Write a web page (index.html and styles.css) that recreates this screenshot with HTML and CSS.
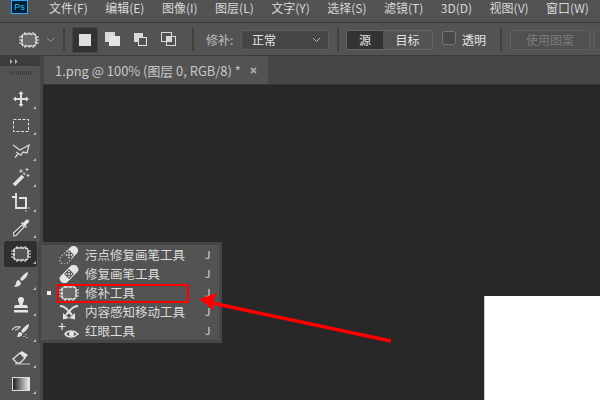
FILE: index.html
```html
<!DOCTYPE html>
<html lang="zh-CN">
<head>
<meta charset="UTF-8">
<title>Photoshop</title>
<link rel="stylesheet" href="styles.css">
</head>
<body>
<div class="app">
    <header class="menubar">
        <div class="logo">Ps</div>
        <nav class="menus">
            <span>文件(F)</span><span>编辑(E)</span><span>图像(I)</span><span>图层(L)</span><span>文字(Y)</span><span>选择(S)</span><span>滤镜(T)</span><span>3D(D)</span><span>视图(V)</span><span>窗口(W)</span>
        </nav>
    </header>

    <div class="options">
        <div class="grip"></div>
        <svg class="opt-patch" width="20" height="16" viewBox="0 0 20 16"><rect x="3" y="2" width="14" height="12" rx="2.500" fill="#6a6a6a" stroke="#e8e8e8" stroke-width="1.600" stroke-dasharray="3.500 .7"/><path d="M0 5h3M0 8h3M0 11h3M17 5h3M17 8h3M17 11h3M6 0v2M10 0v2M14 0v2M6 14v2M10 14v2M14 14v2" stroke="#e8e8e8"/></svg>
        <svg class="chev" width="9" height="6" viewBox="0 0 9 6"><path d="M1 1l3.500 3.500L8 1" fill="none" stroke="#999"/></svg>
        <div class="sep sep-a"></div>
        <div class="mode mode-on"><svg width="12" height="12"><rect width="12" height="12" fill="#e0e0e0"/></svg></div>
        <div class="mode"><svg width="16" height="15"><rect width="10" height="10" fill="#d8d8d8"/><rect x="4" y="4" width="11" height="10" fill="#e4e4e4"/></svg></div>
        <div class="mode"><svg width="14" height="14"><rect width="9" height="9" fill="#d8d8d8"/><rect x="4.500" y="4.500" width="8" height="8" fill="#535353" stroke="#e0e0e0"/></svg></div>
        <div class="mode"><svg width="16" height="15"><rect x=".5" y=".5" width="10" height="9" fill="none" stroke="#d8d8d8"/><rect x="5.500" y="4.500" width="9" height="9" fill="none" stroke="#d8d8d8"/><rect x="6" y="5" width="4" height="4" fill="#d8d8d8"/></svg></div>
        <div class="sep sep-b"></div>
        <span class="opt-label">修补:</span>
        <div class="select"><span>正常</span><svg width="9" height="6" viewBox="0 0 9 6"><path d="M1 1l3.500 3.500L8 1" fill="none" stroke="#bbb"/></svg></div>
        <div class="sep sep-c"></div>
        <div class="seg"><span class="seg-on">源</span><span>目标</span></div>
        <div class="check"></div>
        <span class="check-label">透明</span>
        <div class="sep sep-d"></div>
        <div class="btn-off">使用图案</div>
        <div class="btn-off btn-cut"></div>
    </div>

    <div class="work">
        <aside class="toolbar">
            <div class="collapse"><svg width="9" height="5" viewBox="0 0 9 5"><path d="M0 0l2.500 2.500L0 5zM5 0l2.500 2.500L5 5z" fill="#bbb"/></svg></div>
            <div class="tool-grip"></div>
            <div class="tools">
                <div class="tool"><svg width="20" height="20" viewBox="0 0 20 20"><path d="M10 2l2.500 3H11v4h4V7.500l3 2.500-3 2.500V11h-4v4h1.500L10 18l-2.500-3H9v-4H5v1.500L2 10l3-2.500V9h4V5H7.500z" fill="#e0e0e0"/></svg></div>
                <div class="tool"><svg width="20" height="20" viewBox="0 0 20 20"><rect x="2.500" y="4.500" width="15" height="12" fill="none" stroke="#e0e0e0" stroke-dasharray="3 1.500"/></svg></div>
                <div class="tool"><svg width="20" height="20" viewBox="0 0 20 20"><path d="M2 4l7 5 9-5-2 8-4-1-2 3-5-3M7 13l-3 3.500" fill="none" stroke="#d8d8d8" stroke-width="1.300"/></svg></div>
                <div class="tool"><svg width="20" height="20" viewBox="0 0 20 20"><path d="M3 18L12 9" stroke="#e4e4e4" stroke-width="3.500"/><path d="M14 6l-1.500 1.500" stroke="#aaa" stroke-width="3"/><path d="M10 2v4M8 4h4M16 1v3M14.500 2.500h3M17 7v3M15.500 8.500h3" stroke="#ccc"/></svg></div>
                <div class="tool"><svg width="20" height="20" viewBox="0 0 20 20"><path d="M1 4h5M5 0v15h11" fill="none" stroke="#e4e4e4" stroke-width="1.800"/><path d="M8 5h7v11" fill="none" stroke="#e4e4e4" stroke-width="2"/><path d="M15 17v2M17 15h2" stroke="#ccc"/></svg></div>
                <div class="tool"><svg width="20" height="20" viewBox="0 0 20 20"><path d="M3 18l-.5-3L11 7l2 2-8 8.500z" fill="#444" stroke="#ddd" stroke-width="1.200"/><path d="M10 5l5 5 1-1-1.500-1.500L18 4a2 2 0 0 0-2.500-2.500l-3.500 3.500L11 4z" fill="#e4e4e4"/></svg></div>
                <div class="tool tool-on"><svg width="20" height="16" viewBox="0 0 20 16"><rect x="3" y="2" width="14" height="12" rx="2.500" fill="#555" stroke="#e8e8e8" stroke-width="1.600" stroke-dasharray="3.500 .7"/><path d="M0 5h3M0 8h3M0 11h3M17 5h3M17 8h3M17 11h3M6 0v2M10 0v2M14 0v2M6 14v2M10 14v2M14 14v2" stroke="#e8e8e8"/></svg></div>
                <div class="tool"><svg width="20" height="20" viewBox="0 0 20 20"><path d="M17 2c-3 1-6 4-8 7l2 2c3-2 6-5 6-9z" fill="#e0e0e0"/><path d="M8 10c-2 0-3 2-3 3s-1 3-2 4c3 0 7-1 7-4z" fill="#e0e0e0"/></svg></div>
                <div class="tool"><svg width="20" height="20" viewBox="0 0 20 20"><path d="M7 4a3 3 0 0 1 6 0c0 2-1.500 3-1.500 5H15c1 0 2 1 2 3H3c0-2 1-3 2-3h3.500C8.500 7 7 6 7 4z" fill="#e4e4e4"/><rect x="3" y="14" width="14" height="2.500" fill="#e4e4e4"/></svg></div>
                <div class="tool"><svg width="20" height="20" viewBox="0 0 20 20"><path d="M18 2c-3 1-6 4-8 7l2 2c3-2 6-5 6-9z" fill="#e0e0e0"/><path d="M9 10c-2 0-2 3-3 5 3 0 6-1 5-4z" fill="#e0e0e0"/><path d="M1 8c2-3 4-4 8-3l-2 2-3 1M15 12v1M13 14v1M16 15v1" fill="none" stroke="#ccc" stroke-width="1.300"/></svg></div>
                <div class="tool"><svg width="20" height="20" viewBox="0 0 20 20"><path d="M2 11l7-6 5 5-5 5H6z" fill="none" stroke="#e0e0e0" stroke-width="1.300"/><path d="M9 5l5 5 3-3-6-4z" fill="#e4e4e4"/><path d="M4 16h15" stroke="#ccc"/></svg></div>
                <div class="tool"><div class="gradient"></div></div>
            </div>
        </aside>

        <main class="doc">
            <div class="tabs">
                <div class="tab"><span>1.png @ 100% (图层 0, RGB/8) *</span><svg width="7" height="7" viewBox="0 0 7 7"><path d="M1 1l5 5M6 1L1 6" stroke="#aaa" stroke-width="1.800"/></svg></div>
            </div>
            <div class="canvas">
                <div class="image"></div>
            </div>
        </main>
    </div>

    <div class="flyout">
        <div class="flyout-in">
            <div class="row">
                <span class="mark"></span>
                <svg class="row-ic" width="22" height="18" viewBox="-11 -9 22 18"><g transform="rotate(-45)"><path d="M0-4.500h6.500a4.500 4.500 0 0 1 0 9H0z" fill="#e4e4e4"/><path d="M0 4.500h-6.500a4.500 4.500 0 0 1 0-9H0" fill="none" stroke="#ccc" stroke-dasharray="1.500 1.500"/><rect x="-3.500" y="-3.500" width="7" height="7" fill="#555"/><path d="M-2.500-2.500h1.500v1.500h-1.500zM1-2.500h1.500v1.500H1zM-.8-.8h1.600v1.600h-1.600zM-2.500 1h1.500v1.500h-1.500zM1 1h1.500v1.500H1z" fill="#e4e4e4"/></g></svg>
                <span class="row-t">污点修复画笔工具</span><span class="key">J</span>
            </div>
            <div class="row">
                <span class="mark"></span>
                <svg class="row-ic" width="22" height="18" viewBox="-11 -9 22 18"><g transform="rotate(-45)"><rect x="-11" y="-4.500" width="22" height="9" rx="4" fill="#e4e4e4"/><rect x="-3.500" y="-3.500" width="7" height="7" fill="#555"/><path d="M-2.500-2.500h1.500v1.500h-1.500zM1-2.500h1.500v1.500H1zM-.8-.8h1.600v1.600h-1.600zM-2.500 1h1.500v1.500h-1.500zM1 1h1.500v1.500H1z" fill="#e4e4e4"/></g></svg>
                <span class="row-t">修复画笔工具</span><span class="key">J</span>
            </div>
            <div class="row">
                <span class="mark mark-on"></span>
                <svg class="row-ic" width="22" height="16" viewBox="-1 0 22 16"><rect x="3" y="2" width="14" height="12" rx="2.500" fill="#6a6a6a" stroke="#e8e8e8" stroke-width="1.600" stroke-dasharray="3.500 .7"/><path d="M0 5h3M0 8h3M0 11h3M17 5h3M17 8h3M17 11h3M6 0v2M10 0v2M14 0v2M6 14v2M10 14v2M14 14v2" stroke="#e8e8e8"/></svg>
                <span class="row-t">修补工具</span><span class="key">J</span>
            </div>
            <div class="row">
                <span class="mark"></span>
                <svg class="row-ic" width="22" height="16" viewBox="-1 0 22 16"><path d="M1 2c4 0 6 2 8 4.500L13 11" fill="none" stroke="#e0e0e0" stroke-width="2"/><path d="M19 2c-4 0-6 2-8 4.500L7 11" fill="none" stroke="#e0e0e0" stroke-width="2"/><path d="M4 9l6 5-6 1.500zM16 9l-6 5 6 1.500z" fill="#e0e0e0"/></svg>
                <span class="row-t">内容感知移动工具</span><span class="key">J</span>
            </div>
            <div class="row">
                <span class="mark"></span>
                <svg class="row-ic" width="22" height="18" viewBox="0 0 22 18"><path d="M4 1v7M.5 4.500h7" stroke="#e4e4e4" stroke-width="1.200"/><path d="M7 12c3-4 9-4 13 0-4 4-10 4-13 0z" fill="none" stroke="#e4e4e4" stroke-width="1.500"/><circle cx="13.500" cy="12" r="2.500" fill="#e4e4e4"/></svg>
                <span class="row-t">红眼工具</span><span class="key">J</span>
            </div>
        </div>
    </div>

    <div class="callout"></div>
    <svg class="arrow" width="600" height="400" viewBox="0 0 600 400"><path d="M391 341L212 303" stroke="#f00" stroke-width="3.500"/><path d="M199 299L217 293 213 303 214 310z" fill="#f00"/></svg>
</div>
</body>
</html>
```

FILE: styles.css
```css
* {
    box-sizing: border-box;
}

html, body {
    margin: 0;
    padding: 0;
}

body {
    width: 600px;
    height: 400px;
    overflow: hidden;
    font-family: "Noto Sans CJK SC", "Liberation Sans", sans-serif;
    font-size: 12px;
    color: #d8d8d8;
    background-color: #282828;
}

.app {
    position: relative;
    width: 600px;
    height: 400px;
    display: flex;
    flex-direction: column;
}

/* menu bar */
.menubar {
    height: 23px;
    flex: none;
    display: flex;
    align-items: flex-start;
    background-color: #535353;
    border-bottom: 1px solid #363636;
}

.logo {
    width: 17px;
    height: 14px;
    margin-left: 11px;
    border: 1px solid #31a8ff;
    background-color: #001e36;
    color: #31c5f0;
    font-family: "Liberation Sans", sans-serif;
    font-size: 9px;
    line-height: 12px;
    text-align: center;
}

.menus {
    display: flex;
    gap: 17.500px;
    margin-left: 21px;
    padding-top: 1px;
    line-height: 14px;
}

.menus span {
    white-space: nowrap;
}

/* options bar */
.options {
    height: 33px;
    flex: none;
    display: flex;
    align-items: center;
    padding-top: 1px;
    background-color: #535353;
    border-bottom: 1px solid #3a3a3a;
    white-space: nowrap;
}

.grip {
    width: 3px;
    height: 20px;
    margin-left: 6px;
    background: repeating-linear-gradient(#3e3e3e 0 1px, transparent 1px 2px);
}

.opt-patch {
    margin-left: 13px;
    flex: none;
}

.chev {
    margin-left: 7px;
    flex: none;
}

.sep {
    width: 2px;
    height: 23px;
    flex: none;
    background-color: #3f3f3f;
}

.sep-a {
    margin: 0 7px 0 8px;
}

.mode {
    width: 26px;
    height: 26px;
    flex: none;
    margin-right: 2px;
    display: flex;
    align-items: center;
    justify-content: center;
}

.mode-on {
    background-color: #333;
    border: 1px solid #444;
    border-radius: 2px;
}

.sep-b {
    margin-left: 8px;
}

.opt-label {
    width: 32px;
    flex: none;
    margin-left: 12px;
    color: #bdbdbd;
}

.select {
    width: 88px;
    height: 20px;
    flex: none;
    margin-left: 3px;
    padding: 0 7px 0 10px;
    display: flex;
    align-items: center;
    justify-content: space-between;
    background-color: #464646;
    border: 1px solid #5e5e5e;
    border-radius: 3px;
    color: #e4e4e4;
    line-height: 16px;
}

.sep-c {
    margin-left: 8px;
}

.seg {
    height: 20px;
    flex: none;
    margin-left: 7px;
    display: flex;
    border: 1px solid #666;
    border-radius: 2px;
    color: #e4e4e4;
    line-height: 18px;
}

.seg span {
    width: 49px;
    text-align: center;
}

.seg .seg-on {
    width: 36px;
    background-color: #333;
}

.check {
    width: 14px;
    height: 14px;
    flex: none;
    margin-left: 9px;
    margin-top: -3px;
    border: 1px solid #777;
    border-radius: 3px;
    background-color: #484848;
}

.check-label {
    width: 25px;
    flex: none;
    margin-left: 6px;
    color: #e4e4e4;
}

.sep-d {
    margin-left: 13px;
}

.btn-off {
    width: 80px;
    height: 20px;
    margin-left: 8px;
    flex: none;
    border: 1px solid #626262;
    border-radius: 3px;
    background-color: #505050;
    color: #7b7b7b;
    line-height: 18px;
    text-align: center;
}

.btn-cut {
    width: 20px;
    margin-left: 4px;
}

/* tools and document */
.work {
    flex: 1;
    min-height: 0;
    display: flex;
}

.toolbar {
    width: 43px;
    flex: none;
    background-color: #535353;
    border-right: 3px solid #464646;
}

.collapse {
    height: 10px;
    padding-left: 10px;
    display: flex;
    align-items: center;
    background-color: #3c3c3c;
}

.tool-grip {
    width: 21px;
    height: 4px;
    margin: 5px 0 0 10px;
    background: repeating-linear-gradient(90deg, #3e3e3e 0 1px, transparent 1px 2px);
}

.tools {
    margin-top: 11px;
    display: flex;
    flex-direction: column;
}

.tool {
    position: relative;
    width: 33px;
    height: 25.900px;
    margin-left: 4px;
    display: flex;
    align-items: center;
    justify-content: center;
    border-radius: 3px;
}

.tool::after {
    content: "";
    position: absolute;
    right: 1px;
    bottom: 3px;
    border-left: 3px solid transparent;
    border-bottom: 3px solid #bbb;
}

.tool-on {
    background-color: #2f2f2f;
}

.gradient {
    width: 18px;
    height: 14px;
    border: 1px solid #ddd;
    background: linear-gradient(90deg, #222, #eee);
}

.doc {
    flex: 1;
    min-width: 0;
    display: flex;
    flex-direction: column;
}

.tabs {
    height: 29px;
    flex: none;
    display: flex;
    background-color: #464646;
    border-bottom: 1px solid #363636;
}

.tab {
    width: 224px;
    margin-left: 1px;
    padding-left: 11px;
    display: flex;
    align-items: center;
    gap: 9px;
    background-color: #535353;
    color: #c8c8c8;
    font-size: 12.900px;
    white-space: nowrap;
}

.canvas {
    position: relative;
    flex: 1;
    background-color: #282828;
}

.image {
    position: absolute;
    left: 441px;
    top: 211px;
    right: 0;
    bottom: 0;
    background-color: #fff;
    border-left: 1px solid #ccc;
}

/* tool flyout */
.flyout {
    position: absolute;
    left: 38px;
    top: 242px;
    width: 184px;
    height: 101px;
    padding: 3px;
    background-color: #464646;
}

.flyout-in {
    height: 95px;
    background-color: #535353;
}

.row {
    height: 19px;
    display: flex;
    align-items: center;
    color: #dcdcdc;
    white-space: nowrap;
}

.mark {
    width: 4px;
    height: 4px;
    margin-left: 6px;
}

.mark-on {
    background-color: #eee;
}

.row-ic {
    margin-left: 7px;
    width: 22px;
    flex: none;
}

.row-t {
    width: 120px;
    margin-left: 5px;
    font-size: 12.500px;
}

.key {
    color: #e4e4e4;
    font-size: 10px;
}

/* annotation */
.callout {
    position: absolute;
    left: 57px;
    top: 284px;
    width: 132px;
    height: 19px;
    border: 2px solid #f00;
}

.arrow {
    position: absolute;
    left: 0;
    top: 0;
    pointer-events: none;
}
```
